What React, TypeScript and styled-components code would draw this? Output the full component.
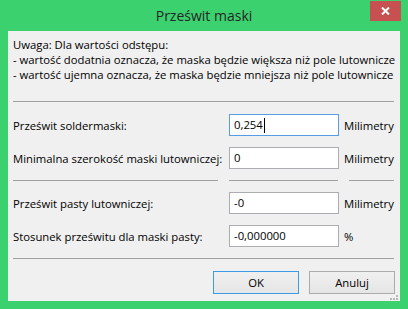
import React from "react";
import styled, { createGlobalStyle } from "styled-components";

const GlobalStyle = createGlobalStyle`
  html, body { margin: 0; padding: 0; background: #3bd16f; }
  body { font-family: "Open Sans", "Noto Sans", sans-serif; }
`;

const Window = styled.div`
  width: 408px;
  height: 309px;
  box-sizing: border-box;
  background: #3bd16f;
  display: flex;
  flex-direction: column;
`;

const TitleBar = styled.div`
  height: 31px;
  flex: none;
  display: grid;
  grid-template-columns: 1fr auto 1fr;
  align-items: start;
`;

const Title = styled.div`
  grid-column: 2;
  font-size: 14px;
  line-height: 31px;
  color: #262626;
  white-space: nowrap;
`;

const CloseButton = styled.div`
  grid-column: 3;
  justify-self: end;
  margin: 1px 7px 0 0;
  width: 31px;
  height: 20px;
  background: #c75050;
  display: flex;
  align-items: center;
  justify-content: center;
`;

const Client = styled.div`
  flex: 1;
  margin: 0 8px 8px;
  background: #f0f0f0;
  padding: 6px 5px 0 5px;
  position: relative;
  display: flex;
  flex-direction: column;
  font-size: 11.3px;
  color: #000;
`;

const Notes = styled.div`
  line-height: 15px;
  white-space: nowrap;
`;

const Divider = styled.div<{ $top: number }>`
  height: 1px;
  background: #a0a0a0;
  margin: ${(p) => p.$top}px 1px 0 0;
`;

const Form = styled.div`
  margin-top: 12px;
  display: grid;
  grid-template-columns: 216px 110px 1fr;
  grid-auto-rows: auto;
  row-gap: 11px;
  align-items: center;
`;

const Label = styled.div`
  white-space: nowrap;
`;

const Unit = styled.div`
  padding-left: 5px;
  white-space: nowrap;
`;

const Field = styled.div<{ $focused?: boolean }>`
  box-sizing: border-box;
  height: 22px;
  border: 1px solid ${(p) => (p.$focused ? "#569de5" : "#abadb3")};
  background: #fff;
  padding: 0 4px;
  line-height: 20px;
  white-space: nowrap;
  display: flex;
  align-items: center;
`;

const Caret = styled.span`
  display: inline-block;
  width: 1px;
  height: 15px;
  background: #000;
  margin-left: 1px;
`;

const Segment = styled.div<{ $ml?: number; $mr?: number }>`
  height: 1px;
  background: #a0a0a0;
  margin-left: ${(p) => p.$ml ?? 0}px;
  margin-right: ${(p) => p.$mr ?? 0}px;
`;

const Buttons = styled.div`
  margin-top: 12px;
  display: flex;
  justify-content: flex-end;
  gap: 10px;
`;

const Button = styled.div<{ $default?: boolean }>`
  box-sizing: border-box;
  width: 86px;
  height: 23px;
  border: 1px solid ${(p) => (p.$default ? "#3c9be6" : "#acacac")};
  background: linear-gradient(#f0f0f0, #e5e5e5);
  display: flex;
  align-items: center;
  justify-content: center;
  font-size: 11.3px;
  color: #000;
`;

const Grip = styled.svg`
  position: absolute;
  right: 2px;
  bottom: 1px;
`;

const rows = [
  { label: "Prześwit soldermaski:", value: "0,254", unit: "Milimetry", focused: true },
  { label: "Minimalna szerokość maski lutowniczej:", value: "0", unit: "Milimetry" },
  { sep: true },
  { label: "Prześwit pasty lutowniczej:", value: "-0", unit: "Milimetry" },
  { label: "Stosunek prześwitu dla maski pasty:", value: "-0,000000", unit: "%" },
] as const;

export default function App() {
  return (
    <>
      <GlobalStyle />
      <Window>
        <TitleBar>
          <Title>Prześwit maski</Title>
          <CloseButton>
            <svg width="9" height="8" viewBox="0 0 9 8">
              <path d="M1 0.5 L8 7.5 M8 0.5 L1 7.5" stroke="#fff" strokeWidth="2" />
            </svg>
          </CloseButton>
        </TitleBar>
        <Client>
          <Notes>
            <div>Uwaga: Dla wartości odstępu:</div>
            <div>- wartość dodatnia oznacza, że maska będzie większa niż pole lutownicze</div>
            <div>- wartość ujemna oznacza, że maska będzie mniejsza niż pole lutownicze</div>
          </Notes>
          <Divider $top={19} />
          <Form>
            {rows.map((r, i) =>
              "sep" in r ? (
                <React.Fragment key={i}>
                  <Segment $mr={11} />
                  <Segment $mr={1} />
                  <Segment $ml={10} $mr={1} />
                </React.Fragment>
              ) : (
                <React.Fragment key={i}>
                  <Label>{r.label}</Label>
                  <Field $focused={"focused" in r}>
                    {r.value}
                    {"focused" in r && <Caret />}
                  </Field>
                  <Unit>{r.unit}</Unit>
                </React.Fragment>
              )
            )}
          </Form>
          <Divider $top={11} />
          <Buttons>
            <Button $default>OK</Button>
            <Button>Anuluj</Button>
          </Buttons>
          <Grip width="9" height="5" viewBox="0 0 9 5">
            <rect x="7" y="0" width="2" height="2" fill="#b8b8b8" />
            <rect x="1" y="3" width="2" height="2" fill="#b8b8b8" />
            <rect x="4" y="3" width="2" height="2" fill="#b8b8b8" />
            <rect x="7" y="3" width="2" height="2" fill="#b8b8b8" />
          </Grip>
        </Client>
      </Window>
    </>
  );
}
